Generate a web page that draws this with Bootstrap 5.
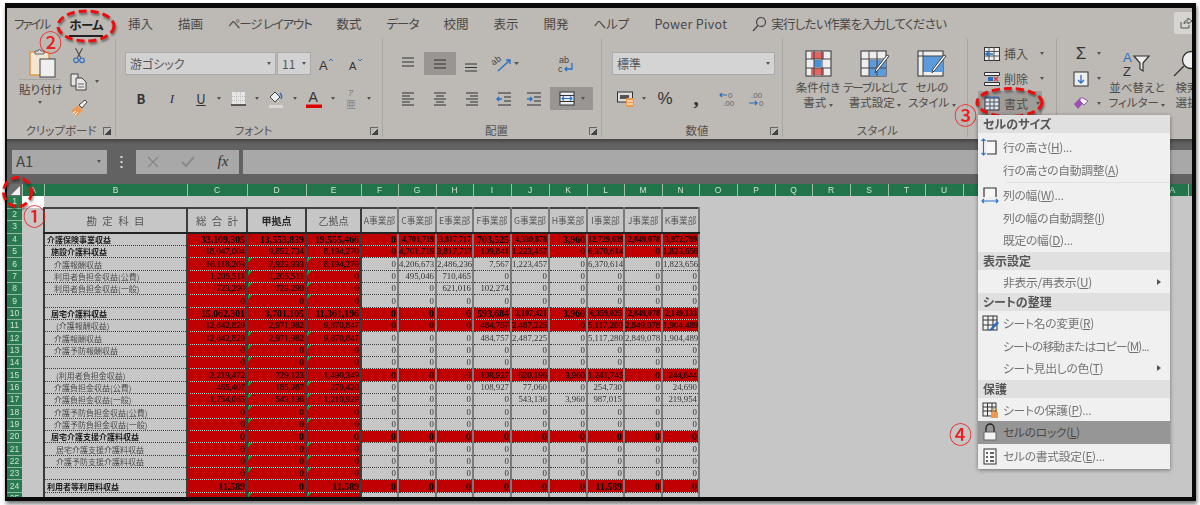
<!DOCTYPE html>
<html lang="ja">
<head>
<meta charset="utf-8">
<title>Excel</title>
<link href="https://cdn.jsdelivr.net/npm/bootstrap@5.3.0/dist/css/bootstrap.min.css" rel="stylesheet">
<style>
html,body{margin:0;background:#fff}
body{font-family:"Noto Sans CJK JP","Liberation Sans",sans-serif;font-feature-settings:"palt";color:#444}
.shot{position:relative;width:1200px;height:505px;overflow:hidden;background:#fff}
.frame{margin:3px 4px 4px 5px;height:498px;border:solid #0a0a0a;border-width:5px 4px 4px 2px;overflow:hidden;box-shadow:1px 3px 4px rgba(0,0,0,.55);filter:blur(.3px);background:#c6c6c6}
.ribbon{height:131px;background:#bdb9b5;overflow:hidden}
.tabs{height:31px;padding-left:7px;font-size:12.5px;color:#4a4846;gap:25px;white-space:nowrap}
.tabs span{line-height:20px}
.tab-on{font-weight:700;color:#222;border-bottom:2px solid #222;margin:5px 0 0 -5px;letter-spacing:-.7px}
.k20{letter-spacing:-2px}.k12{letter-spacing:-1.2px}.k10{letter-spacing:-1px}.kp3{letter-spacing:.3px}.k7{letter-spacing:-.7px}
.hint{margin-left:-1px}
.grp{height:98px;border-right:1px solid #a9a5a1;flex:none}
.g1{width:109px}.g2{width:267px;padding-left:9px}.g3{width:219px;padding-left:9px}.g4{width:181px;padding-left:10px}.g5{width:185px;padding-left:5px}.g6{width:89px}.g7{width:135px;border-right:0}
.pad13{padding-top:13px}
.rw{height:23px}
.rw+.rw{margin-top:12px}
.lab{margin-top:auto;display:grid;grid-template-columns:1fr auto 1fr;font-size:11.5px;line-height:13px;color:#55524f;align-items:center}
.lab i{grid-column:3;justify-self:end;width:8px;height:8px;margin-right:4px;border-left:1px solid #666;border-top:1px solid #666;background:linear-gradient(135deg,transparent 55%,#444 55%)}
.lab b{grid-column:2;font-weight:400}
.sl{display:flex;align-items:center;justify-content:center;height:23px;flex:none;font-size:13px;color:#333}
.w8{width:8px}.w24{width:24px}.w28{width:28px}.w30{width:30px}.w32{width:32px}.w34{width:34px}.w36{width:36px}.w43{width:43px}.w72{width:72px}
.crt{width:0;height:0;border:solid transparent;border-width:3px 2.5px 0;border-top-color:#555;display:inline-block;flex:none}
.fbox{height:23px;background:#d2d2d2;border:1px solid #aaa;font-size:12px;color:#555;padding:0 4px;flex:none}
.fname{width:151px}.fsize{width:34px;margin-left:1px}.fnum{width:163px;background:#d4d4d4}
.act{background:#989592}
.mbtn{margin-left:2px;gap:6px;background:#989592}
.clipc{width:60px}
.clipdiv{width:41px;margin:1px 0 0 12px;border-top:1px solid #a9a5a1;font-size:11.5px;text-align:center;padding-top:1px;line-height:16px;color:#444;white-space:nowrap}
.cstack{width:34px;padding-top:5px;gap:3px}
.stc{flex:none;font-size:11.5px;line-height:15px;color:#4f4d4a;white-space:nowrap;padding-top:11px;display:flex;flex-direction:column;align-items:center}
.stc svg{display:block;margin:0 0 3px}
.w60{width:60px}.w54{width:54px}
.pt2p{padding-top:2px}
.cr{height:25px;padding-left:12px;font-size:12px;color:#4f4d4a;white-space:nowrap}
.cr .ic{width:24px;display:flex;justify-content:center;flex:none}
.cr .tx{width:32px;flex:none}
.cr-on{margin-left:10px;padding-left:2px;width:64px;background:#a09c98}
.w64{width:64px}.w36b{width:36px}
.fbar{height:45px;background:linear-gradient(#454545,#626262 5px);padding-left:5px}
.bx{height:24px;background:#a8a8a8;flex:none}
.nbx{width:95px;font-size:15px;color:#444;padding:0 6px 0 4px}
.dots{width:29px;flex:none}
.dots svg{display:block;margin:0 auto}
.cbx{width:103px}
.inbx{flex:1 1 auto;margin-left:4px}
.sheet{width:1185px;max-width:none;table-layout:fixed;border-collapse:collapse;font-family:"Liberation Serif","Noto Sans CJK JP",serif;color:#333}
.sheet th,.sheet td{padding:0;line-height:11px;overflow:hidden;white-space:nowrap}
.sheet tr{height:12px}
.sheet tbody tr:nth-child(3n){height:13px}
.sheet thead tr{height:12px}
.sheet thead th{background:#22744a;color:#cfe0d6;font:400 8.5px "Liberation Sans",sans-serif;text-align:center;border-left:1px solid #9dbcaa}
.sheet thead th.cnr{background:#6d6d6d;border:0;position:relative}
.cnr svg{display:block}
.sheet tbody th{background:#2a7a50;color:#cfe0d6;font:400 8.5px/11px "Liberation Sans",sans-serif;text-align:center;border-bottom:1px solid #93b5a2}
.a1{background:#fff}
.lb{font:400 8px/11px "Noto Sans CJK JP",sans-serif;color:#4c4c4c;border-left:2px solid #3a3a3a;border-bottom:1px dotted #3e3e3e}
.ll0{padding-left:2px!important}.ll1{padding-left:6px!important}.ll2{padding-left:9px!important}.ll3{padding-left:11px!important}
.lbb{font-weight:700;color:#1c1c1c}
.n{font-size:8.8px;text-align:right;padding-right:1px!important;border-bottom:1px dotted #3e3e3e;border-right:2px solid #7a7a7a;color:#333}
.lb,.hot{border-right:2px solid #3c3c3c}
.hot{background:#c00000;color:#1a0000;-webkit-text-stroke:.2px #1a0000}
.ra .n{background:#c00000;color:#1a0000;-webkit-text-stroke:.2px #1a0000}
.ra .hb,.hb{font-weight:700;color:#0a0000;font-size:9.8px;-webkit-text-stroke:0}
.ra .hs{font-weight:700;color:#0a0000;font-size:8px;-webkit-text-stroke:0}
.tg .g{background-image:linear-gradient(135deg,#1f8f35 3px,transparent 3px);background-repeat:no-repeat}
.hd{font:400 10px/12px "Noto Sans CJK JP",sans-serif;color:#555;text-align:center;border:2px solid #3c3c3c;border-top:2px solid #444;border-bottom:2px solid #222}
.hdl{font-size:10.5px;word-spacing:3px}
.hds{font-size:8.7px;border-width:2px 2px 2px 0;border-right-color:#7a7a7a}
.hdb{font-weight:700;color:#2a2a2a}
.mnu{display:block;position:absolute;left:978px;top:115px;width:192px;height:354px;padding:0;margin:0;border:0;border-radius:0;background:#f0f0f0;box-shadow:0 1px 4px rgba(0,0,0,.45);filter:blur(.3px);font-size:12px}
.mnu .dropdown-header{height:18px;padding:0 5px;font-size:12px;line-height:18px;font-weight:700;color:#565656;background:#e0e0e0}
.mnu .dropdown-item{position:relative;height:22.5px;padding:0 0 0 25px;font-size:11.8px;letter-spacing:-.3px;line-height:22px;color:#737373;display:flex;align-items:center;white-space:pre}
.mnu .dropdown-item u{text-underline-offset:1px}
.mnu .dropdown-item.tight{letter-spacing:-.9px}
.mnu .mi{position:absolute;left:3px;top:2px}
.mnu .sub{position:absolute;right:9px;top:8px;border:solid transparent;border-width:3px 0 3px 4px;border-left-color:#555}
.mt3p{margin-top:3px}.mt1p{margin-top:1px}
.mnu .lock{background:#969696;color:#4a4a4a}
.sep{height:1px;margin:1px 0 1px 28px;background:#e2e2e2}
.over{position:absolute;left:0;top:0;pointer-events:none}
.cnum{position:absolute;color:#f01c1c;font-size:23px;line-height:24px;font-family:"Noto Sans CJK JP",sans-serif;font-weight:500}
.c1{left:23px;top:203px}.c2{left:39px;top:29px}.c3{left:954px;top:102px}.c4{left:949px;top:421px}
.share{position:absolute;left:1174px;top:12px;width:18px;height:22px;background:#d6d4d1;border-radius:2px 0 0 2px;padding:5px 0 0 6px}
.share svg{display:block}
</style>
</head>
<body>
<div class="shot">
<div class="frame">
<div class="ribbon">
<div class="tabs d-flex align-items-center">
<span class="k20">ファイル</span><span class="tab-on">ホーム</span><span>挿入</span><span>描画</span><span class="k12">ページ レイアウト</span><span>数式</span><span class="k10">データ</span><span>校閲</span><span>表示</span><span>開発</span><span>ヘルプ</span><span class="kp3">Power Pivot</span>
<span class="d-flex align-items-center hint"><svg width="16" height="16" viewBox="0 0 16 16" fill="none" stroke="#444" stroke-width="1.2"><circle cx="10" cy="6" r="4.5"/><path d="M7 9.5 2 15"/></svg><span class="ms-1 k7">実行したい作業を入力してください</span></span>
</div>
<div class="d-flex">
<div class="grp g1 d-flex flex-column">
<div class="d-flex">
<div class="clipc">
<svg class="d-block" style="margin:9px 0 0 22px" width="28" height="30" viewBox="0 0 28 30"><rect x="1" y="4" width="19" height="23" rx="1" fill="#f2e6d2" stroke="#e59a4c" stroke-width="1.6"/><path d="M6 6V3h3l1.500-2 1.500 2h3v3z" fill="#d8d8d8" stroke="#666"/><rect x="11" y="11" width="15" height="18" fill="#efefef" stroke="#444"/></svg>
<div class="clipdiv">貼り付け<div class="d-flex justify-content-center pt-1"><span class="crt"></span></div></div>
</div>
<div class="cstack d-flex flex-column">
<div class="sl w24"><svg width="12" height="16" viewBox="0 0 14 18" fill="none"><path d="M3 0l6 11M11 0 5 11" stroke="#444" stroke-width="1.200"/><circle cx="3.500" cy="14" r="2.700" stroke="#2b6fc2" stroke-width="1.300"/><circle cx="10.500" cy="14" r="2.700" stroke="#2b6fc2" stroke-width="1.300"/></svg></div>
<div class="d-flex align-items-center"><div class="sl w24"><svg width="18" height="18" viewBox="0 0 18 18" fill="#e8e6e3" stroke="#444"><path d="M1 1h7v12H1z"/><path d="M6 5h6l4 4v8H6z"/><path d="M8 11h6M8 14h6" stroke="#666"/></svg></div><span class="crt ms-1"></span></div>
<div class="sl w24"><svg width="18" height="18" viewBox="0 0 18 18"><path d="M1 12l7-6 5 5-6 6z" fill="#ec9a55"/><path d="M3 14l3-2M5 16l3-3" stroke="#fff"/><path d="M9 6l3 3 5-6-2-2z" fill="#f3f3f3" stroke="#444"/></svg></div>
</div>
</div>
<div class="lab"><b>クリップボード</b><i></i></div>
</div>
<div class="grp g2 d-flex flex-column pad13">
<div class="rw d-flex align-items-center">
<div class="fbox fname d-flex align-items-center justify-content-between">游ゴシック<span class="crt"></span></div>
<div class="fbox fsize d-flex align-items-center justify-content-between">11<span class="crt"></span></div>
<div class="sl w30 ms-0"><svg width="22" height="16" viewBox="0 0 22 16"><text x="4" y="14" font-size="13" fill="#333" font-family="Liberation Sans">A</text><path d="M14 5l2-2 2 2" fill="none" stroke="#2b6fc2"/></svg></div>
<div class="sl w30"><svg width="22" height="16" viewBox="0 0 22 16"><text x="4" y="14" font-size="11" fill="#333" font-family="Liberation Sans">A</text><path d="M13 3l2 2 2-2" fill="none" stroke="#2b6fc2"/></svg></div>
</div>
<div class="rw d-flex align-items-center">
<div class="sl w32 fw-bold">B</div>
<div class="sl w30 fst-italic" style="font-family:'Liberation Serif'">I</div>
<div class="sl w28 text-decoration-underline">U</div><div class="sl w8"><span class="crt"></span></div>
<div class="sl w30"><svg width="15" height="15" viewBox="0 0 15 15"><path d="M1 1h13v13H1z" fill="#e6e6e6"/><path d="M5.500 1v12M9.500 1v12M1 5.500h13M1 9.500h13" stroke="#bbb" stroke-dasharray="1 1"/><path d="M0 14h15" stroke="#333" stroke-width="1.500"/></svg></div><div class="sl w8"><span class="crt"></span></div>
<div class="sl w30"><svg width="16" height="18" viewBox="0 0 16 18"><path d="M2 7l5-5 5 5-5 5z" fill="#eee" stroke="#444"/><path d="M12 3c2 2 2 4 1 6" fill="none" stroke="#2b6fc2" stroke-width="1.500"/><path d="M1 15h14v3H1z" fill="#d9d7d4"/></svg></div><div class="sl w8"><span class="crt"></span></div>
<div class="sl w30"><svg width="16" height="18" viewBox="0 0 16 18"><text x="2.500" y="12" font-size="14" fill="#333" font-family="Liberation Sans">A</text><path d="M0 14.500h16v3.500H0z" fill="#e00000"/></svg></div><div class="sl w8"><span class="crt"></span></div>
<div class="sl w28"><svg width="14" height="22" viewBox="0 0 14 22"><text x="4" y="7" font-size="6" fill="#666">ア</text><text x="2" y="20" font-size="10" fill="#888">亜</text></svg></div><div class="sl w8"><span class="crt"></span></div>
</div>
<div class="lab"><b>フォント</b><i></i></div>
</div>
<div class="grp g3 d-flex flex-column pad13">
<div class="rw d-flex align-items-center">
<div class="sl w32"><svg width="16" height="16" viewBox="0 0 16 16" stroke="#333" stroke-width="1.200"><path d="M2 2h12M2 6h12M2 10h12"/></svg></div>
<div class="sl w32 act"><svg width="16" height="16" viewBox="0 0 16 16" stroke="#333" stroke-width="1.200"><path d="M2 4h12M2 8h12M2 12h12"/></svg></div>
<div class="sl w30"><svg width="16" height="16" viewBox="0 0 16 16" stroke="#333" stroke-width="1.200"><path d="M2 8h12M2 11.500h12M2 15h12"/></svg></div>
<div class="sl w36"><svg width="36" height="20" viewBox="0 0 36 20"><text x="7" y="10" font-size="9" fill="#444" transform="rotate(-35 10 10)" font-family="Liberation Sans">ab</text><path d="M12 17 24 6M20 6h4v4" fill="none" stroke="#2b6fc2" stroke-width="1.300"/><path d="M28 8h5l-2.500 3z" fill="#555"/></svg></div>
<div class="sl w72 ms-2"><svg width="16" height="20" viewBox="0 0 16 20"><text x="1" y="9" font-size="9" fill="#444" font-family="Liberation Sans">ab</text><text x="0" y="18" font-size="9" fill="#444" font-family="Liberation Sans">c</text><path d="M14 9v6H7M9 13l-2 2 2 2" fill="none" stroke="#2b6fc2" stroke-width="1.300"/></svg></div>
</div>
<div class="rw d-flex align-items-center">
<div class="sl w32"><svg width="16" height="14" viewBox="0 0 16 14" stroke="#333" stroke-width="1.200"><path d="M2 1h12M2 4h8M2 7h12M2 10h8M2 13h12"/></svg></div>
<div class="sl w32"><svg width="16" height="14" viewBox="0 0 16 14" stroke="#333" stroke-width="1.200"><path d="M2 1h12M4 4h8M2 7h12M4 10h8M2 13h12"/></svg></div>
<div class="sl w32"><svg width="16" height="14" viewBox="0 0 16 14" stroke="#333" stroke-width="1.200"><path d="M2 1h12M6 4h8M2 7h12M6 10h8M2 13h12"/></svg></div>
<div class="sl w32"><svg width="16" height="14" viewBox="0 0 16 14" fill="none" stroke="#333" stroke-width="1.200"><path d="M2 1h13M8 5h7M8 9h7M2 13h13"/><path d="M1 7h5M3 5 1 7l2 2" stroke="#2b6fc2" stroke-width="1.400"/></svg></div>
<div class="sl w28"><svg width="16" height="14" viewBox="0 0 16 14" fill="none" stroke="#333" stroke-width="1.200"><path d="M1 1h14M8 5h7M8 9h7M1 13h14"/><path d="M1 7h5M4 5l2 2-2 2" stroke="#2b6fc2" stroke-width="1.400"/></svg></div>
<div class="sl w43 mbtn"><svg width="16" height="15" viewBox="0 0 16 15"><rect x="1" y="1" width="14" height="13" fill="#e8edf5" stroke="#333"/><path d="M1 4.500h14M1 10.500h14" stroke="#333"/><path d="M3 7.500h10M5 5.500l-2 2 2 2M11 5.500l2 2-2 2" fill="none" stroke="#2b6fc2" stroke-width="1.100"/></svg><span class="crt"></span></div>
</div>
<div class="lab"><b>配置</b><i></i></div>
</div>
<div class="grp g4 d-flex flex-column pad13">
<div class="rw d-flex align-items-center"><div class="fbox fnum d-flex align-items-center justify-content-between">標準<span class="crt"></span></div></div>
<div class="rw d-flex align-items-center">
<div class="sl w28"><svg width="18" height="16" viewBox="0 0 18 16"><rect x="0.500" y="1" width="15" height="10" fill="#ddd" stroke="#333"/><path d="M3 4h9v4H3z" fill="#555"/><rect x="9" y="7" width="8" height="9" rx="1" fill="#ee9a4d"/><path d="M10 10h6M10 13h6" stroke="#fff"/></svg></div><div class="sl w8"><span class="crt"></span></div>
<div class="sl w34" style="font-size:17px;font-family:'Liberation Sans'">%</div>
<div class="sl w28 fw-bold" style="font-size:21px;font-family:'Liberation Serif'">,</div>
<div class="sl w36"><svg width="18" height="16" viewBox="0 0 18 16"><text x="9" y="7" font-size="8" fill="#666" font-family="Liberation Sans">0</text><text x="4" y="15" font-size="8" fill="#666" font-family="Liberation Sans">.00</text><path d="M8 4H1M3 2 1 4l2 2" fill="none" stroke="#2b6fc2" stroke-width="1.200"/></svg></div>
<div class="sl w24"><svg width="18" height="16" viewBox="0 0 18 16"><text x="2" y="7" font-size="8" fill="#666" font-family="Liberation Sans">.00</text><text x="10" y="15" font-size="8" fill="#666" font-family="Liberation Sans">0</text><path d="M0 12h8M6 10l2 2-2 2" fill="none" stroke="#2b6fc2" stroke-width="1.200"/></svg></div>
</div>
<div class="lab"><b>数値</b><i></i></div>
</div>
<div class="grp g5 d-flex flex-column">
<div class="d-flex">
<div class="stc w60"><svg width="27" height="27" viewBox="0 0 27 27"><rect x="1" y="1" width="25" height="25" fill="#eee" stroke="#333"/><path d="M6 2h13v7H6zM6 18h13v7H6z" fill="#e06666"/><path d="M9 10h7v7H9z" fill="#4a90d9"/><path d="M1 9h25M1 18h25M9 1v25M17 1v25" stroke="#444"/></svg><span>条件付き</span><span>書式 <span class="crt"></span></span></div>
<div class="stc w54"><svg width="30" height="27" viewBox="0 0 30 27"><rect x="1" y="1" width="25" height="25" fill="#eee" stroke="#333"/><path d="M9 10h17v16H9z" fill="#5b9bdc"/><path d="M1 9h25M1 18h25M9 1v25M17 1v25" stroke="#444"/><path d="M29 6 18 20l-3 3 1-4L27 5z" fill="#fff" stroke="#444"/></svg><span class="k12">テーブルとして</span><span>書式設定 <span class="crt"></span></span></div>
<div class="stc w60"><svg width="30" height="27" viewBox="0 0 30 27"><rect x="1" y="1" width="25" height="25" fill="#eee" stroke="#333"/><path d="M6 6h20v16H6z" fill="#5b9bdc"/><path d="M1 6h25M6 1v25" stroke="#444"/><path d="M29 6 18 20l-3 3 1-4L27 5z" fill="#fff" stroke="#444"/></svg><span>セルの</span><span>スタイル <span class="crt"></span></span></div>
</div>
<div class="lab"><b>スタイル</b></div>
</div>
<div class="grp g6 pt2p">
<div class="cr d-flex align-items-center"><span class="ic"><svg width="16" height="14" viewBox="0 0 16 14"><rect x="0.500" y="0.500" width="15" height="13" fill="#eee" stroke="#333"/><path d="M0 4.500h16M0 9h16M5 0v14M10 0v14" stroke="#555"/><path d="M9 7H2M5 4.500 2 7l3 2.500" fill="none" stroke="#2b6fc2" stroke-width="1.500"/></svg></span><span class="tx">挿入</span><span class="crt ms-1"></span></div>
<div class="cr d-flex align-items-center"><span class="ic"><svg width="16" height="14" viewBox="0 0 16 14"><path d="M.5.500h15v3h-15zM.5 10.500h15v3h-15z" fill="#eee" stroke="#333"/><rect x="4" y="5" width="5" height="4" fill="#2b6fc2"/><path d="M10 5l4 4M14 5l-4 4" stroke="#d83b3b" stroke-width="1.400"/></svg></span><span class="tx">削除</span><span class="crt ms-1"></span></div>
<div class="cr cr-on d-flex align-items-center"><span class="ic"><svg width="16" height="15" viewBox="0 0 16 15"><rect x="1" y="2" width="14" height="12" fill="#dbe6f4" stroke="#333"/><path d="M1 6h14M1 10h14M6 2v12M10 2v12" stroke="#555"/><path d="M1 1h14" stroke="#2b6fc2"/></svg></span><span class="tx">書式</span><span class="crt"></span></div>
</div>
<div class="grp g7 d-flex">
<div class="pt2p">
<div class="cr d-flex align-items-center"><span class="ic" style="font:400 17px 'Liberation Sans';color:#333">Σ</span><span class="crt ms-1"></span></div>
<div class="cr d-flex align-items-center"><span class="ic"><svg width="16" height="16" viewBox="0 0 16 16"><rect x="1" y="1" width="14" height="14" fill="#eee" stroke="#333"/><path d="M8 4v8M5 9l3 3 3-3" fill="none" stroke="#2b6fc2" stroke-width="1.300"/></svg></span><span class="crt ms-1"></span></div>
<div class="cr d-flex align-items-center"><span class="ic"><svg width="16" height="13" viewBox="0 0 16 13"><path d="M1 7l6-6 4 4-6 7z" fill="#9b4fb5"/><path d="M7 1h3l5 3-4 4-4-4z" fill="#f1f1f1" stroke="#9b4fb5"/></svg></span><span class="crt ms-1"></span></div>
</div>
<div class="stc w64 ms-1"><svg width="34" height="27" viewBox="0 0 34 27"><text x="3" y="12" font-size="13" fill="#2b6fc2" font-family="Liberation Sans">A</text><text x="3" y="26" font-size="13" fill="#333" font-family="Liberation Sans">Z</text><path d="M14 6h15l-6 7v8l-3-2v-6z" fill="#eee" stroke="#333" stroke-width="1.200"/></svg><span>並べ替えと</span><span>フィルター <span class="crt"></span></span></div>
<div class="stc w36b"><svg width="30" height="27" viewBox="0 0 30 27" fill="none" stroke="#333" stroke-width="1.300"><circle cx="19" cy="10" r="8.500" fill="#eee"/><path d="M12 16 2 26"/></svg><span>検索</span><span>選択</span></div>
</div>
</div>
</div>
<div class="fbar d-flex align-items-center">
<div class="bx nbx d-flex align-items-center justify-content-between">A1<span class="crt"></span></div>
<div class="dots"><svg width="3" height="12" viewBox="0 0 3 12" fill="#ddd"><rect x="0.500" y="0" width="2" height="2"/><rect x="0.500" y="5" width="2" height="2"/><rect x="0.500" y="10" width="2" height="2"/></svg></div>
<div class="bx cbx d-flex align-items-center">
<div class="sl w34"><svg width="12" height="12" viewBox="0 0 12 12" stroke="#8a8a8a" stroke-width="1.500"><path d="M1 1l10 10M11 1 1 11"/></svg></div>
<div class="sl w36"><svg width="14" height="12" viewBox="0 0 14 12" fill="none" stroke="#8a8a8a" stroke-width="2"><path d="M1 6l4 4 8-9"/></svg></div>
<div class="sl w34 fst-italic" style="font:italic 400 15px 'Liberation Serif'">fx</div>
</div>
<div class="bx inbx"></div>
</div>
<table class="sheet">
<colgroup><col style="width:15px"><col style="width:22px"><col style="width:143px"><col style="width:60px"><col style="width:59px"><col style="width:55px"><col style="width:37px"><col style="width:38px"><col style="width:37px"><col style="width:38px"><col style="width:38px"><col style="width:38px"><col style="width:37px"><col style="width:38px"><col style="width:37px"><col style="width:38px"><col style="width:38px"><col style="width:37px"><col style="width:38px"><col style="width:38px"><col style="width:37px"><col style="width:38px"><col style="width:37px"><col style="width:38px"><col style="width:38px"><col style="width:38px"><col style="width:37px"><col style="width:37px"><col style="width:4px"></colgroup>
<thead><tr><th class="cnr"><svg width="15" height="12" viewBox="0 0 15 12"><path d="M13 2v9H4z" fill="#f2f2f2"/></svg></th><th>A</th><th>B</th><th>C</th><th>D</th><th>E</th><th>F</th><th>G</th><th>H</th><th>I</th><th>J</th><th>K</th><th>L</th><th>M</th><th>N</th><th>O</th><th>P</th><th>Q</th><th>R</th><th>S</th><th>T</th><th>U</th><th></th><th></th><th></th><th></th><th></th><th>AA</th><th></th></tr></thead>
<tbody>
<tr><th>1</th><td class="a1"></td><td colspan="27"></td></tr>
<tr><th>2</th><td></td><td rowspan="2" class="hd hdl">勘 定 科 目</td><td rowspan="2" class="hd hdl">総 合 計</td><td rowspan="2" class="hd hdb">甲拠点</td><td rowspan="2" class="hd">乙拠点</td><td rowspan="2" class="hd hds">A事業部</td><td rowspan="2" class="hd hds">C事業部</td><td rowspan="2" class="hd hds">E事業部</td><td rowspan="2" class="hd hds">F事業部</td><td rowspan="2" class="hd hds">G事業部</td><td rowspan="2" class="hd hds">H事業部</td><td rowspan="2" class="hd hds">I事業部</td><td rowspan="2" class="hd hds">J事業部</td><td rowspan="2" class="hd hds">K事業部</td><td colspan="14"></td></tr>
<tr><th>3</th><td></td><td colspan="14"></td></tr>
<tr class="ra"><th>4</th><td></td><td class="lb ll0 lbb">介護保険事業収益</td><td class="n hot hb">33,109,305</td><td class="n hot hb">13,553,839</td><td class="n hot hb">19,555,466</td><td class="n hb">0</td><td class="n hs">4,701,719</td><td class="n hs">3,817,717</td><td class="n hb">703,525</td><td class="n hs">4,330,878</td><td class="n hb">3,960</td><td class="n hs">12,729,639</td><td class="n hs">2,849,078</td><td class="n hs">3,972,789</td><td colspan="14"></td></tr>
<tr class="ra"><th>5</th><td></td><td class="lb ll1 lbb">施設介護料収益</td><td class="n hot">18,047,004</td><td class="n hot">9,852,734</td><td class="n hot">8,194,270</td><td class="n">0</td><td class="n">4,701,719</td><td class="n">3,817,717</td><td class="n">109,841</td><td class="n">1,223,457</td><td class="n">0</td><td class="n">6,370,614</td><td class="n">0</td><td class="n">1,823,656</td><td colspan="14"></td></tr>
<tr class="tg"><th>6</th><td></td><td class="lb ll2">介護報酬収益</td><td class="n hot">16,118,203</td><td class="n hot g">7,923,933</td><td class="n hot g">8,194,270</td><td class="n">0</td><td class="n">4,206,673</td><td class="n">2,486,236</td><td class="n">7,567</td><td class="n">1,223,457</td><td class="n">0</td><td class="n">6,370,614</td><td class="n">0</td><td class="n">1,823,656</td><td colspan="14"></td></tr>
<tr class="tg"><th>7</th><td></td><td class="lb ll2">利用者負担金収益(公費)</td><td class="n hot">1,205,511</td><td class="n hot g">1,205,511</td><td class="n hot g">0</td><td class="n">0</td><td class="n">495,046</td><td class="n">710,465</td><td class="n">0</td><td class="n">0</td><td class="n">0</td><td class="n">0</td><td class="n">0</td><td class="n">0</td><td colspan="14"></td></tr>
<tr class="tg"><th>8</th><td></td><td class="lb ll2">利用者負担金収益(一般)</td><td class="n hot">723,290</td><td class="n hot g">723,290</td><td class="n hot g">0</td><td class="n">0</td><td class="n">0</td><td class="n">621,016</td><td class="n">102,274</td><td class="n">0</td><td class="n">0</td><td class="n">0</td><td class="n">0</td><td class="n">0</td><td colspan="14"></td></tr>
<tr class="tg"><th>9</th><td></td><td class="lb"></td><td class="n hot">0</td><td class="n hot g">0</td><td class="n hot g">0</td><td class="n">0</td><td class="n">0</td><td class="n">0</td><td class="n">0</td><td class="n">0</td><td class="n">0</td><td class="n">0</td><td class="n">0</td><td class="n">0</td><td colspan="14"></td></tr>
<tr class="ra"><th>10</th><td></td><td class="lb ll1 lbb">居宅介護料収益</td><td class="n hot hb">15,062,301</td><td class="n hot hb">3,701,105</td><td class="n hot hb">11,361,196</td><td class="n hb">0</td><td class="n hb">0</td><td class="n hb">0</td><td class="n hb">593,684</td><td class="n hs">3,107,421</td><td class="n hb">3,960</td><td class="n hs">6,359,025</td><td class="n hs">2,849,078</td><td class="n hs">2,149,133</td><td colspan="14"></td></tr>
<tr class="ra"><th>11</th><td></td><td class="lb ll3">(介護報酬収益)</td><td class="n hot">12,842,829</td><td class="n hot">2,971,982</td><td class="n hot">9,870,847</td><td class="n">0</td><td class="n">0</td><td class="n">0</td><td class="n">484,757</td><td class="n">2,487,225</td><td class="n">0</td><td class="n">5,117,280</td><td class="n">2,849,078</td><td class="n">1,904,489</td><td colspan="14"></td></tr>
<tr class="tg"><th>12</th><td></td><td class="lb ll2">介護報酬収益</td><td class="n hot">12,842,829</td><td class="n hot g">2,971,982</td><td class="n hot g">9,870,847</td><td class="n">0</td><td class="n">0</td><td class="n">0</td><td class="n">484,757</td><td class="n">2,487,225</td><td class="n">0</td><td class="n">5,117,280</td><td class="n">2,849,078</td><td class="n">1,904,489</td><td colspan="14"></td></tr>
<tr class="tg"><th>13</th><td></td><td class="lb ll2">介護予防報酬収益</td><td class="n hot">0</td><td class="n hot g">0</td><td class="n hot g">0</td><td class="n">0</td><td class="n">0</td><td class="n">0</td><td class="n">0</td><td class="n">0</td><td class="n">0</td><td class="n">0</td><td class="n">0</td><td class="n">0</td><td colspan="14"></td></tr>
<tr class="tg"><th>14</th><td></td><td class="lb"></td><td class="n hot">0</td><td class="n hot g">0</td><td class="n hot g">0</td><td class="n">0</td><td class="n">0</td><td class="n">0</td><td class="n">0</td><td class="n">0</td><td class="n">0</td><td class="n">0</td><td class="n">0</td><td class="n">0</td><td colspan="14"></td></tr>
<tr class="ra"><th>15</th><td></td><td class="lb ll3">(利用者負担金収益)</td><td class="n hot">2,219,472</td><td class="n hot">729,123</td><td class="n hot">1,490,349</td><td class="n">0</td><td class="n">0</td><td class="n">0</td><td class="n">108,927</td><td class="n">620,196</td><td class="n">3,960</td><td class="n">1,241,745</td><td class="n">0</td><td class="n">244,644</td><td colspan="14"></td></tr>
<tr class="tg"><th>16</th><td></td><td class="lb ll2">介護負担金収益(公費)</td><td class="n hot">465,407</td><td class="n hot g">185,987</td><td class="n hot g">279,420</td><td class="n">0</td><td class="n">0</td><td class="n">0</td><td class="n">108,927</td><td class="n">77,060</td><td class="n">0</td><td class="n">254,730</td><td class="n">0</td><td class="n">24,690</td><td colspan="14"></td></tr>
<tr class="tg"><th>17</th><td></td><td class="lb ll2">介護負担金収益(一般)</td><td class="n hot">1,754,065</td><td class="n hot g">543,136</td><td class="n hot g">1,210,929</td><td class="n">0</td><td class="n">0</td><td class="n">0</td><td class="n">0</td><td class="n">543,136</td><td class="n">3,960</td><td class="n">987,015</td><td class="n">0</td><td class="n">219,954</td><td colspan="14"></td></tr>
<tr class="tg"><th>18</th><td></td><td class="lb ll2">介護予防負担金収益(公費)</td><td class="n hot">0</td><td class="n hot g">0</td><td class="n hot g">0</td><td class="n">0</td><td class="n">0</td><td class="n">0</td><td class="n">0</td><td class="n">0</td><td class="n">0</td><td class="n">0</td><td class="n">0</td><td class="n">0</td><td colspan="14"></td></tr>
<tr class="tg"><th>19</th><td></td><td class="lb ll2">介護予防負担金収益(一般)</td><td class="n hot">0</td><td class="n hot g">0</td><td class="n hot g">0</td><td class="n">0</td><td class="n">0</td><td class="n">0</td><td class="n">0</td><td class="n">0</td><td class="n">0</td><td class="n">0</td><td class="n">0</td><td class="n">0</td><td colspan="14"></td></tr>
<tr class="ra"><th>20</th><td></td><td class="lb ll1 lbb">居宅介護支援介護料収益</td><td class="n hot hb">0</td><td class="n hot hb">0</td><td class="n hot hb">0</td><td class="n hb">0</td><td class="n hb">0</td><td class="n hb">0</td><td class="n hb">0</td><td class="n hb">0</td><td class="n hb">0</td><td class="n hb">0</td><td class="n hb">0</td><td class="n hb">0</td><td colspan="14"></td></tr>
<tr class="tg"><th>21</th><td></td><td class="lb ll3">居宅介護支援介護料収益</td><td class="n hot">0</td><td class="n hot g">0</td><td class="n hot g">0</td><td class="n">0</td><td class="n">0</td><td class="n">0</td><td class="n">0</td><td class="n">0</td><td class="n">0</td><td class="n">0</td><td class="n">0</td><td class="n">0</td><td colspan="14"></td></tr>
<tr class="tg"><th>22</th><td></td><td class="lb ll3">介護予防支援介護料収益</td><td class="n hot">0</td><td class="n hot g">0</td><td class="n hot g">0</td><td class="n">0</td><td class="n">0</td><td class="n">0</td><td class="n">0</td><td class="n">0</td><td class="n">0</td><td class="n">0</td><td class="n">0</td><td class="n">0</td><td colspan="14"></td></tr>
<tr class="tg"><th>23</th><td></td><td class="lb"></td><td class="n hot">0</td><td class="n hot g">0</td><td class="n hot g">0</td><td class="n">0</td><td class="n">0</td><td class="n">0</td><td class="n">0</td><td class="n">0</td><td class="n">0</td><td class="n">0</td><td class="n">0</td><td class="n">0</td><td colspan="14"></td></tr>
<tr class="ra"><th>24</th><td></td><td class="lb ll0 lbb">利用者等利用料収益</td><td class="n hot hb">11,589</td><td class="n hot hb">0</td><td class="n hot hb">11,589</td><td class="n hb">0</td><td class="n hb">0</td><td class="n hb">0</td><td class="n hb">0</td><td class="n hb">0</td><td class="n hb">0</td><td class="n hb">11,589</td><td class="n hb">0</td><td class="n hb">0</td><td colspan="14"></td></tr>
<tr class="tg"><th>25</th><td></td><td class="lb ll3"></td><td class="n hot"></td><td class="n hot g"></td><td class="n hot g"></td><td class="n"></td><td class="n"></td><td class="n"></td><td class="n"></td><td class="n"></td><td class="n"></td><td class="n"></td><td class="n"></td><td class="n"></td><td colspan="14"></td></tr>
</tbody>
</table>
</div>
<div class="share"><svg width="12" height="12" viewBox="0 0 12 12" fill="none" stroke="#555"><path d="M1 5v6h8V8M4 7c0-3 2-4 4-4V1l4 3-4 3V5C6 5 5 6 4 7z"/></svg></div>
<ul class="dropdown-menu show mnu list-unstyled">
<li class="dropdown-header">セルのサイズ</li>
<li class="dropdown-item mt3p"><svg class="mi" width="18" height="18" viewBox="0 0 18 18" fill="none"><path d="M6 3h9v13H6" fill="#f7f7f7" stroke="#333" stroke-width="1.200"/><path d="M2.500 1v16M.5 3l2-2 2 2M.5 15l2 2 2-2" stroke="#2b6fc2" stroke-width="1.100"/></svg><span>行の高さ(<u>H</u>)...</span></li>
<li class="dropdown-item"><span>行の高さの自動調整(<u>A</u>)</span></li>
<li class="sep"></li>
<li class="dropdown-item"><svg class="mi" width="18" height="18" viewBox="0 0 18 18" fill="none"><path d="M3 11V2h12v9" fill="#f7f7f7" stroke="#333" stroke-width="1.200"/><path d="M1 15h16M3 13l-2 2 2 2M15 13l2 2-2 2" stroke="#2b6fc2" stroke-width="1.100"/></svg><span>列の幅(<u>W</u>)...</span></li>
<li class="dropdown-item"><span>列の幅の自動調整(<u>I</u>)</span></li>
<li class="dropdown-item"><span>既定の幅(<u>D</u>)...</span></li>
<li class="dropdown-header">表示設定</li>
<li class="dropdown-item mt1p"><span>非表示/再表示(<u>U</u>)</span><span class="sub"></span></li>
<li class="dropdown-header">シートの整理</li>
<li class="dropdown-item mt1p"><svg class="mi" width="18" height="18" viewBox="0 0 18 18" fill="#f2f2f2" stroke="#333"><rect x="2" y="2" width="14" height="14"/><path d="M2 6h14M2 11h14M7 2v14M12 2v14" fill="none"/><path d="M9 15l7-8 2 2-7 7-3 1z" fill="#2b6fc2" stroke="none"/></svg><span>シート名の変更(<u>R</u>)</span></li>
<li class="dropdown-item tight"><span>シートの移動またはコピー(<u>M</u>)...</span></li>
<li class="dropdown-item"><span>シート見出しの色(<u>T</u>)</span><span class="sub"></span></li>
<li class="dropdown-header">保護</li>
<li class="dropdown-item mt1p"><svg class="mi" width="18" height="18" viewBox="0 0 18 18" fill="#f2f2f2" stroke="#333"><rect x="2" y="2" width="13" height="13"/><path d="M2 6h13M2 10h13M6.500 2v13M11 2v13" fill="none"/><rect x="10" y="11" width="7" height="6" fill="#ee9a4d" stroke="none"/><path d="M11.500 11V9.500a2 2 0 0 1 4 0V11" fill="none" stroke="#c9863d"/></svg><span>シートの保護(<u>P</u>)...</span></li>
<li class="dropdown-item lock"><svg class="mi" width="18" height="18" viewBox="0 0 18 18"><path d="M5 10V5a4 4 0 0 1 8 0v5" fill="none" stroke="#222" stroke-width="1.300"/><rect x="3" y="9" width="12" height="8" fill="#f4f4f4" stroke="#666"/></svg><span>セルのロック(<u>L</u>)</span></li>
<li class="dropdown-item mt1p"><svg class="mi" width="18" height="18" viewBox="0 0 18 18" fill="none" stroke="#333"><rect x="3" y="2" width="12" height="15" fill="#f8f8f8"/><path d="M5 6h2M5 10h2M5 14h2M9 6h4M9 10h4M9 14h4" stroke-width="1.300"/></svg><span>セルの書式設定(<u>E</u>)...</span></li>
</ul>
<svg class="over" width="1200" height="505" viewBox="0 0 1200 505" fill="none" stroke="#ee0d0d" stroke-width="3" stroke-dasharray="8 4"><g style="filter:drop-shadow(1px 2px 1px rgba(0,0,0,.45))"><ellipse cx="86" cy="26" rx="28" ry="15"/><ellipse cx="1009.500" cy="102.500" rx="32.500" ry="14"/><ellipse cx="17.500" cy="192" rx="14" ry="14.500"/><ellipse cx="1032" cy="432.500" rx="52" ry="13.500"/></g></svg>
<span class="cnum c1">①</span><span class="cnum c2">②</span><span class="cnum c3">③</span><span class="cnum c4">④</span>
</div>
<script src="https://cdn.jsdelivr.net/npm/bootstrap@5.3.0/dist/js/bootstrap.bundle.min.js"></script>
</body>
</html>
